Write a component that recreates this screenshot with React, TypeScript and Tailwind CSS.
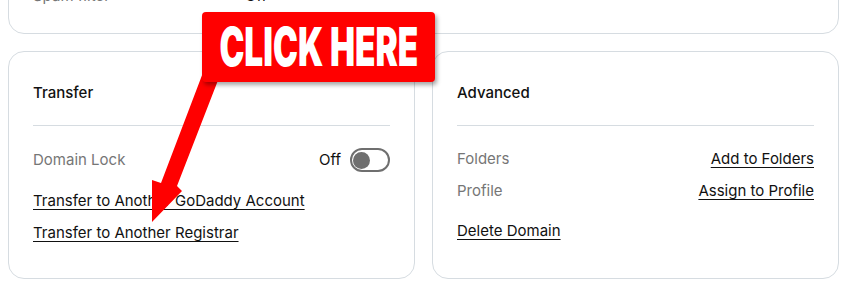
import React from 'react';

const font = { fontFamily: 'Inter, "Noto Sans", sans-serif' };

function Toggle() {
  return (
    <div className="flex h-6 w-10 items-center rounded-full border-2 border-[#6f6f6f] pl-[1px]">
      <div className="h-[17px] w-[17px] rounded-full bg-[#6f6f6f]" />
    </div>
  );
}

function Card({ title, children }: { title: string; children: React.ReactNode }) {
  return (
    <div className="rounded-2xl border border-[#d6dce1] bg-white px-[24px] pt-[29px] pb-[33px]">
      <div className="h-6 text-[15px] leading-6 font-medium text-[#111111]">{title}</div>
      <div className="mt-[20px] border-t border-[#d6dce1]" />
      {children}
    </div>
  );
}

export default function App() {
  return (
    <div className="relative h-[290px] w-[850px] overflow-hidden bg-white" style={font}>
      <div className="pl-2 pr-[11px]">
        {/* top card, cut by the window */}
        <div className="-mt-[41px] rounded-2xl border border-[#d6dce1] px-[24px] pt-6 pb-[25px]">
          <div className="flex h-6 items-center text-[15px] leading-6">
            <span className="w-[212px] text-[#767676]">Spam filter</span>
            <span className="text-[#111111]">Off</span>
          </div>
        </div>

        <div className="mt-[17px] grid grid-cols-2 gap-[17px]">
          <Card title="Transfer">
            <div className="mt-[22px] flex h-6 items-center justify-between text-[15px] leading-6">
              <span className="text-[#767676]">Domain Lock</span>
              <div className="flex items-center gap-[9px]">
                <span className="text-[#111111]">Off</span>
                <Toggle />
              </div>
            </div>
            <div className="mt-[17px] flex flex-col gap-2 text-[15px] leading-6 text-[#111111]">
              <a className="w-fit underline underline-offset-[3px]">Transfer to Another GoDaddy Account</a>
              <a className="w-fit underline underline-offset-[3px]">Transfer to Another Registrar</a>
            </div>
          </Card>

          <Card title="Advanced">
            <div className="mt-[21px] flex flex-col gap-2 text-[15px] leading-6">
              <div className="flex justify-between">
                <span className="text-[#767676]">Folders</span>
                <a className="text-[#111111] underline underline-offset-[3px]">Add to Folders</a>
              </div>
              <div className="flex justify-between">
                <span className="text-[#767676]">Profile</span>
                <a className="text-[#111111] underline underline-offset-[3px]">Assign to Profile</a>
              </div>
            </div>
            <div className="mt-4 text-[15px] leading-6 text-[#111111]">
              <a className="underline underline-offset-[3px]">Delete Domain</a>
            </div>
          </Card>
        </div>
      </div>

      {/* annotation overlay */}
      <svg className="pointer-events-none absolute top-0 left-0" width="850" height="290">
        <polygon points="204,70 222,70 177,186 182,191 152,222 152,180 161,183" fill="#ff0000" />
      </svg>
      <div className="absolute top-[12px] left-[202px] flex h-[70px] w-[233px] items-center justify-center rounded-[4px] bg-[#ff0000] shadow-[2px_3px_4px_rgba(0,0,0,0.35)]">
        <span className="inline-block scale-x-[0.63] text-[53px] leading-none font-black whitespace-nowrap text-white">
          CLICK HERE
        </span>
      </div>
    </div>
  );
}
